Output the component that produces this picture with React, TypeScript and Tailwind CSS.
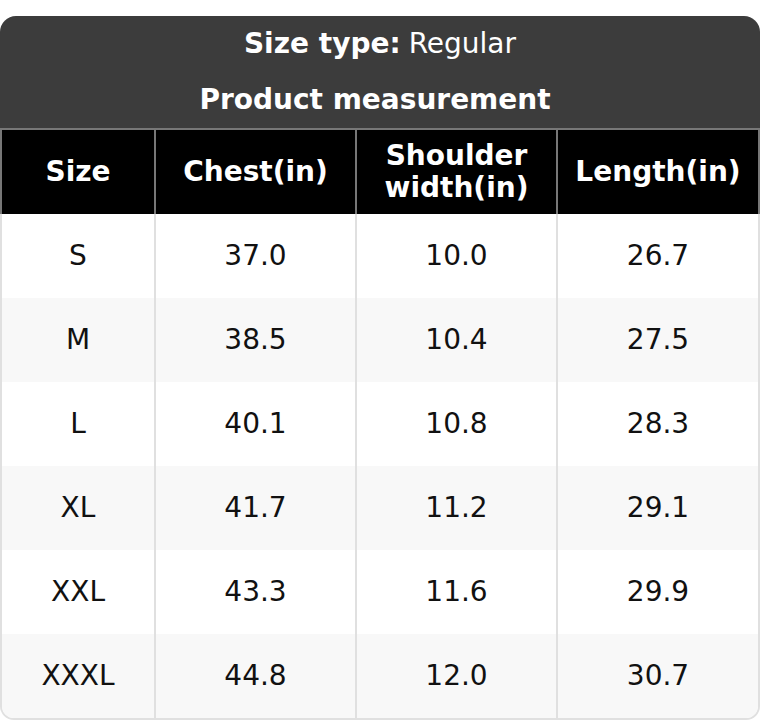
const rows = [
  ['S', '37.0', '10.0', '26.7'],
  ['M', '38.5', '10.4', '27.5'],
  ['L', '40.1', '10.8', '28.3'],
  ['XL', '41.7', '11.2', '29.1'],
  ['XXL', '43.3', '11.6', '29.9'],
  ['XXXL', '44.8', '12.0', '30.7'],
];

const cols = 'grid grid-cols-[152px_201px_201px_202px]';

export default function App() {
  return (
    <div className="w-[760px] bg-white pt-[16px] font-['DejaVu_Sans',sans-serif] text-[28px]">
      {/* Titre */}
      <div className="rounded-t-[16px] bg-[#3c3c3c] text-white">
        <div className="flex h-[56px] items-center justify-center">
          <span className="font-bold">Size type:</span>
          <span className="ml-[8px]">Regular</span>
        </div>
        <div className="flex h-[56px] items-center justify-center pr-[10px] font-bold">Product measurement</div>
      </div>

      {/* En-tête du tableau */}
      <div className={`${cols} h-[86px] border-x-2 border-t-2 border-[#777] bg-black font-bold leading-[32px] text-white`}>
        <div className="flex items-center justify-center">Size</div>
        <div className="flex items-center justify-center border-l-2 border-[#777]">Chest(in)</div>
        <div className="flex items-center justify-center border-l-2 border-[#777] text-center">
          Shoulder
          <br />
          width(in)
        </div>
        <div className="flex items-center justify-center border-l-2 border-[#777]">Length(in)</div>
      </div>

      {/* Lignes */}
      <div className="overflow-hidden rounded-b-[14px] border-x-2 border-b-2 border-[#e0e0e0] text-[#111]">
        {rows.map((row, i) => (
          <div key={row[0]} className={`${cols} h-[84px] ${i % 2 === 1 ? 'bg-[#f8f8f8]' : 'bg-white'}`}>
            {row.map((cell, j) => (
              <div
                key={j}
                className={`flex items-center justify-center ${j > 0 ? 'border-l-2 border-[#e0e0e0]' : ''}`}
              >
                {cell}
              </div>
            ))}
          </div>
        ))}
      </div>
    </div>
  );
}
